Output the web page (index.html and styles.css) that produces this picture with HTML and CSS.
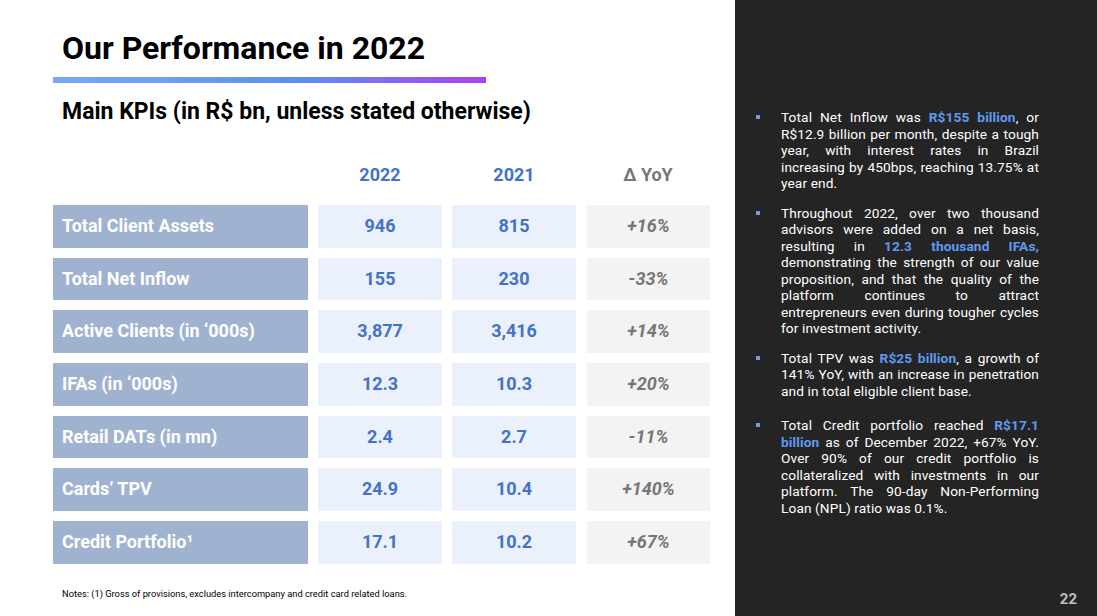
FILE: index.html
```html
<!DOCTYPE html>
<html lang="en">
<head>
<meta charset="utf-8">
<title>Our Performance in 2022</title>
<link rel="stylesheet" href="styles.css">
</head>
<body>
<div class="slide">
  <main class="main">
    <h1 class="title">Our Performance in 2022</h1>
    <div class="title-bar"></div>
    <h2 class="subtitle">Main KPIs (in R$ bn, unless stated otherwise)</h2>

    <div class="kpi-table">
      <div class="head"></div>
      <div class="head head-blue">2022</div>
      <div class="head head-blue">2021</div>
      <div class="head head-grey">Δ YoY</div>

      <div class="label">Total Client Assets</div>
      <div class="val">946</div>
      <div class="val">815</div>
      <div class="yoy">+16%</div>

      <div class="label">Total Net Inflow</div>
      <div class="val">155</div>
      <div class="val">230</div>
      <div class="yoy">-33%</div>

      <div class="label">Active Clients (in ‘000s)</div>
      <div class="val">3,877</div>
      <div class="val">3,416</div>
      <div class="yoy">+14%</div>

      <div class="label">IFAs (in ‘000s)</div>
      <div class="val">12.3</div>
      <div class="val">10.3</div>
      <div class="yoy">+20%</div>

      <div class="label">Retail DATs (in mn)</div>
      <div class="val">2.4</div>
      <div class="val">2.7</div>
      <div class="yoy">-11%</div>

      <div class="label">Cards’ TPV</div>
      <div class="val">24.9</div>
      <div class="val">10.4</div>
      <div class="yoy">+140%</div>

      <div class="label">Credit Portfolio¹</div>
      <div class="val">17.1</div>
      <div class="val">10.2</div>
      <div class="yoy">+67%</div>
    </div>

    <p class="notes">Notes: (1) Gross of provisions, excludes intercompany and credit card related loans.</p>
  </main>

  <aside class="side">
    <ul class="bullets">
      <li>Total Net Inflow was <b class="hl">R$155 billion</b>, or R$12.9 billion per month, despite a tough year, with interest rates in Brazil increasing by 450bps, reaching 13.75% at year end.</li>
      <li>Throughout 2022, over two thousand advisors were added on a net basis, resulting in <b class="hl">12.3 thousand IFAs,</b> demonstrating the strength of our value proposition, and that the quality of the platform continues to attract entrepreneurs even during tougher cycles for investment activity.</li>
      <li>Total TPV was <b class="hl">R$25 billion</b>, a growth of 141% YoY, with an increase in penetration and in total eligible client base.</li>
      <li class="spaced">Total Credit portfolio reached <b class="hl">R$17.1 billion</b> as of December 2022, +67% YoY. Over 90% of our credit portfolio is collateralized with investments in our platform. The 90-day Non-Performing Loan (NPL) ratio was 0.1%.</li>
    </ul>
    <div class="page-num">22</div>
  </aside>
</div>
</body>
</html>
```

FILE: styles.css
```css
* { box-sizing: border-box; }

html, body {
  margin: 0;
  padding: 0;
  background: #ffffff;
}

body {
  font-family: Roboto, "Liberation Sans", sans-serif;
}

.slide {
  width: 1097px;
  height: 616px;
  display: flex;
  overflow: hidden;
}

.main {
  width: 735px;
  flex: none;
  background: #ffffff;
  display: flex;
  flex-direction: column;
}

.title {
  margin: 30px 0 0 62px;
  font-size: 32px;
  line-height: 36px;
  font-weight: 700;
  color: #000000;
}

.title-bar {
  margin: 11px 0 0 53px;
  width: 433px;
  height: 6px;
  background: linear-gradient(90deg, #7ba8f0 0%, #6a9af2 35%, #5b8ef3 58%, #8a62f6 80%, #ac3ff8 100%);
}

.subtitle {
  margin: 16px 0 0 62px;
  font-size: 23px;
  line-height: 26px;
  font-weight: 700;
  color: #000000;
}

.kpi-table {
  margin: 35px 0 0 53px;
  display: grid;
  grid-template-columns: 255px 124px 124px 124px;
  grid-template-rows: 35px;
  grid-auto-rows: 42.5px;
  column-gap: 10px;
  row-gap: 10.17px;
}

.head {
  font-size: 18px;
  line-height: 30px;
  font-weight: 700;
  text-align: center;
  align-self: start;
}

.head-blue { color: #4472c4; }
.head-grey { color: #767676; }

.label {
  background: #9fb2d0;
  color: #ffffff;
  font-size: 18px;
  font-weight: 700;
  line-height: 42.5px;
  padding-left: 9px;
  white-space: nowrap;
}

.val {
  background: #eaf1fc;
  color: #4472c4;
  font-size: 18px;
  font-weight: 700;
  line-height: 42.5px;
  text-align: center;
}

.yoy {
  background: #f3f3f3;
  color: #767676;
  font-size: 18px;
  font-weight: 700;
  font-style: italic;
  line-height: 42.5px;
  text-align: center;
  margin-left: 1px;
}

.notes {
  margin: 24px 0 0 62px;
  font-size: 9.3px;
  line-height: 12px;
  color: #000000;
}

.side {
  flex: 1;
  background: #242424;
  display: flex;
  flex-direction: column;
  padding: 109px 58px 0 46px;
}

.bullets {
  list-style: none;
  margin: 0;
  padding: 0;
}

.bullets li {
  position: relative;
  color: #ffffff;
  font-size: 13.7px;
  line-height: 16.5px;
  letter-spacing: 0.1px;
  text-align: justify;
  margin-bottom: 13px;
}

.bullets li::before {
  content: "";
  position: absolute;
  left: -25px;
  top: 6px;
  width: 4px;
  height: 4px;
  background: #6f9be8;
}

.bullets li.spaced { margin-top: 18px; }

.hl {
  color: #6199f0;
  font-weight: 700;
}

.page-num {
  margin-top: auto;
  align-self: flex-end;
  margin-right: -38px;
  margin-bottom: 8px;
  font-size: 15px;
  font-weight: 700;
  color: #bfbfbf;
}
```
